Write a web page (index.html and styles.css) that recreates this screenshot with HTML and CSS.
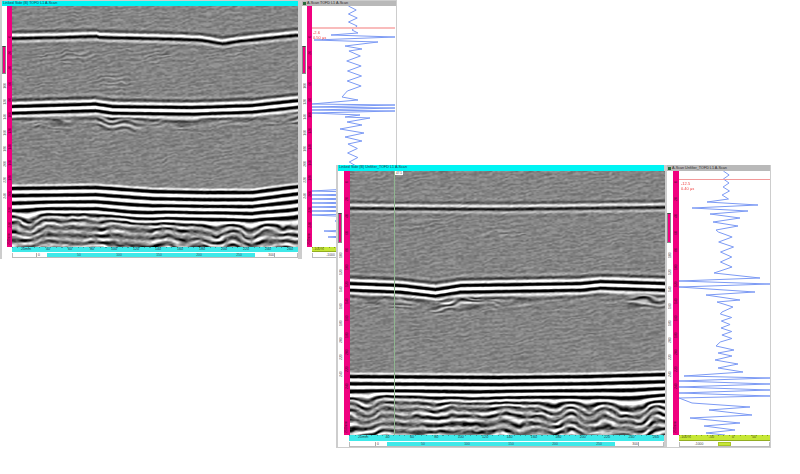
FILE: index.html
```html
<!DOCTYPE html>
<html lang="en">
<head>
<meta charset="utf-8">
<title>TOFD scans</title>
<link rel="stylesheet" href="styles.css">
</head>
<body>
<main class="desk">
  <section class="win win-one">
    <div class="pane pane-b">
      <div class="title title-b">Linked Side (B) TOFD L1 A-Scan</div>
      <div class="body">
        <div class="scale"><span class="thumb"></span><div class="marks"><i>100</i><i>120</i><i>140</i><i>160</i><i>180</i><i>200</i><i>220</i><i>240</i></div></div>
        <div class="depth"><i>0</i><i>20</i><i>40</i><i>60</i><i>80</i><i>100</i><i>120</i><i>140</i><i>160</i><i>180</i><i>200</i><i>220</i><i>240</i><b>250mm</b></div>
        <div class="view"><canvas id="b1" width="286" height="241"></canvas></div>
      </div>
      <div class="foot">
        <div class="ruler ruler-c"><i>20mm</i><i>40</i><i>60</i><i>80</i><i>100</i><i>120</i><i>140</i><i>160</i><i>180</i><i>200</i><i>220</i><i>240</i><i>260</i></div>
        <div class="scroll">
          <span class="s-blank"></span><span class="s-zero">0</span>
          <div class="s-bar"><i>50</i><i>100</i><i>150</i><i>200</i><i>250</i></div>
          <span class="s-end">300</span>
        </div>
      </div>
    </div>
    <div class="pane pane-a">
      <div class="title title-a"><em></em>A-Scan TOFD L1 A-Scan</div>
      <div class="body">
        <div class="scale"><span class="thumb"></span><div class="marks"><i>100</i><i>120</i><i>140</i><i>160</i><i>180</i><i>200</i><i>220</i><i>240</i></div></div>
        <div class="depth"><i>0</i><i>20</i><i>40</i><i>60</i><i>80</i><i>100</i><i>120</i><i>140</i><i>160</i><i>180</i><i>200</i><i>220</i><i>240</i><b>250mm</b></div>
        <div class="plot">
          <canvas id="a1" width="83" height="241"></canvas>
          <div class="cursor"></div>
          <div class="read">-2.6<br>0.50 µs</div>
        </div>
      </div>
      <div class="foot">
        <div class="ruler ruler-y"><i>-100%</i><i>-50</i><i>0</i><i>50</i></div>
        <div class="scroll"><span class="y-side">-1000</span><span class="y-mid"></span><span class="y-side"></span></div>
      </div>
    </div>
  </section>

  <section class="win win-two">
    <div class="pane pane-b">
      <div class="title title-b">Linked Side (B) Unfilter_TOFD L1 A-Scan</div>
      <div class="body">
        <div class="scale"><span class="thumb"></span><div class="marks"><i>100</i><i>120</i><i>140</i><i>160</i><i>180</i><i>200</i><i>220</i><i>240</i></div></div>
        <div class="depth"><i>0</i><i>20</i><i>40</i><i>60</i><i>80</i><i>100</i><i>120</i><i>140</i><i>160</i><i>180</i><i>200</i><i>220</i><i>240</i><b>250mm</b></div>
        <div class="view">
          <canvas id="b2" width="315" height="264"></canvas>
          <div class="vline"></div>
          <div class="vtag">47.5</div>
        </div>
      </div>
      <div class="foot">
        <div class="ruler ruler-c"><i>20mm</i><i>40</i><i>60</i><i>80</i><i>100</i><i>120</i><i>140</i><i>160</i><i>180</i><i>200</i><i>220</i><i>240</i><i>260</i></div>
        <div class="scroll">
          <span class="s-blank"></span><span class="s-zero">0</span>
          <div class="s-bar"><i>50</i><i>100</i><i>150</i><i>200</i><i>250</i></div>
          <span class="s-end">300</span>
        </div>
      </div>
    </div>
    <div class="pane pane-a">
      <div class="title title-a"><em></em>A-Scan Unfilter_TOFD L1 A-Scan</div>
      <div class="body">
        <div class="scale"><span class="thumb"></span><div class="marks"><i>100</i><i>120</i><i>140</i><i>160</i><i>180</i><i>200</i><i>220</i><i>240</i></div></div>
        <div class="depth"><i>0</i><i>20</i><i>40</i><i>60</i><i>80</i><i>100</i><i>120</i><i>140</i><i>160</i><i>180</i><i>200</i><i>220</i><i>240</i><b>250mm</b></div>
        <div class="plot">
          <canvas id="a2" width="91" height="264"></canvas>
          <div class="cursor"></div>
          <div class="read">-12.5<br>0.40 µs</div>
        </div>
      </div>
      <div class="foot">
        <div class="ruler ruler-y"><i>-100%</i><i>-50</i><i>0</i><i>50</i></div>
        <div class="scroll"><span class="y-side">-1000</span><span class="y-mid"></span><span class="y-side"></span></div>
      </div>
    </div>
  </section>
</main>
<script src="scans.js"></script>
</body>
</html>
```
FILE: styles.css
```css
* { box-sizing: border-box; }
html, body { margin: 0; padding: 0; background: #fff; }
body { width: 800px; height: 474px; overflow: hidden; font-family: "Liberation Sans", Arial, sans-serif; }
i, em, b { font-style: normal; font-weight: normal; }
.desk { position: relative; width: 800px; height: 474px; }
canvas { display: block; }
.view canvas { filter: blur(0.45px); }
.plot canvas { filter: blur(0.3px); }

.win { position: absolute; display: flex; background: #cdcdcd; }
.win-one { left: 0; top: 0; width: 397px; height: 259px; padding: 1px 1px 0 2px; gap: 4px;
  --title: 5px; --h: 241px; --side: 5px; --foot: 5px; --b-w: 296px; --a-w: 94px; --img: 286px; --plot: 83px;
  --step: 15.7px; --first: 23px; --bottom: 22px; --ruler-pad: 3px; --blank: 24px; --zero: 10px; --bar: 208px; --bar-cell: 40px; --bar-pad: 12px; --end: 20px; --y-side: 40px; --y-mid: 12px; }
.win-two { left: 336px; top: 165px; width: 435px; height: 283px; padding: 0 1px 1px 2px; gap: 3px;
  --title: 6px; --h: 264px; --side: 6px; --foot: 6px; --b-w: 326px; --a-w: 103px; --img: 315px; --plot: 91px;
  --step: 17px; --first: 0px; --bottom: 24.4px; --ruler-pad: 2px; --blank: 26px; --zero: 11px; --bar: 228px; --bar-cell: 44px; --bar-pad: 14px; --end: 24px; --y-side: 39px; --y-mid: 13px; }

.pane { display: flex; flex-direction: column; flex: none; background: #fff; }
.pane-b { width: var(--b-w); }
.pane-a { width: var(--a-w); }
.title { height: var(--title); flex: none; font-size: 3.7px; line-height: 5px; color: #16384c; white-space: nowrap; overflow: hidden; padding-left: 1px; }
.title-b { background: #00f4f4; }
.title-a { background: #b9b9b9; display: flex; align-items: center; gap: 1px; color: #2c2c2c; }
.title-a em { width: 3px; height: 3px; background: #2b6a3c; flex: none; }

.body { display: flex; height: var(--h); flex: none; }
.scale { width: var(--side); flex: none; background: #fff; display: flex; flex-direction: column; }
.thumb { display: block; width: 4px; height: 28px; margin: 40px 0 2px 0; background: #f0007f; border: 1px solid #8a8a8a; border-top-color: #444; flex: none; }
.win-two .thumb { margin-top: 42px; height: 30px; }
.marks { display: flex; flex-direction: column; align-items: center; padding-top: 2px; background: #fff; flex: 1; overflow: hidden; }
.marks i, .depth i { display: block; writing-mode: vertical-rl; transform: rotate(180deg); font-size: 3.4px; line-height: 4px; color: #555; text-align: center; height: var(--step); flex: none; }
.depth { width: var(--side); flex: none; background: #f0007f; display: flex; flex-direction: column; align-items: center; padding-top: var(--first); overflow: hidden; position: relative; }
.win-two .depth { padding-top: 3px; }
.depth i { color: #5a0030; }
.depth b { position: absolute; left: 0; right: 0; bottom: 2px; writing-mode: vertical-rl; transform: rotate(180deg); font-size: 3.6px; line-height: 5px; text-align: center; color: #50002a; }
.view { width: var(--img); flex: none; position: relative; overflow: hidden; }
.plot { width: var(--plot); flex: none; position: relative; overflow: hidden; background: #fff; }

.foot { margin-left: calc(var(--side) * 2); display: flex; flex-direction: column; gap: 1px; flex: none; }
.win-two .foot { margin-left: 11px; }
.win-two .pane-a .foot { margin-left: 12px; }
.ruler { height: var(--foot); flex: none; display: flex; padding-left: var(--ruler-pad); font-size: 3.7px; line-height: 5px; color: #16424c;
  background-image: repeating-linear-gradient(90deg, #2aa3a8 0 1px, transparent 1px 5.5px); background-size: 100% 1px; background-repeat: no-repeat; }
.ruler-c { background-color: #3ee9e9; }
.ruler-c i { width: var(--bottom); text-align: center; flex: none; }
.ruler-y { background-color: #c6e736; background-image: repeating-linear-gradient(90deg, #7f9a20 0 1px, transparent 1px 5.5px); border-bottom: 1px solid #92ad22; color: #46520c; justify-content: space-between; padding: 0 14px 0 1px; }
.scroll { height: 5px; flex: none; display: flex; background: #fff; border: 1px solid #bbb; border-top-width: 0; font-size: 3.4px; line-height: 5px; color: #444; }
.s-blank { width: var(--blank); flex: none; border-right: 1px solid #aaa; }
.s-zero { width: var(--zero); flex: none; padding-left: 1px; }
.s-bar { width: var(--bar); flex: none; background: #3ee9e9; display: flex; padding-left: var(--bar-pad); color: #2a5a64; }
.s-bar i { width: var(--bar-cell); text-align: center; flex: none; }
.s-end { width: var(--end); flex: none; border-right: 1px solid #aaa; text-align: right; }
.y-side { flex: 1; text-align: center; }
.y-mid { width: var(--y-mid); background: #c6e736; border: 1px solid #a8c426; flex: none; }

.cursor { position: absolute; left: 0; right: 0; top: 21px; height: 2px; background: #f9bcbc; }
.win-two .cursor { top: 8px; height: 1px; background: #f29a9a; }
.read { position: absolute; left: 1px; top: 24px; font-size: 4px; line-height: 5px; color: #f04040; }
.win-two .read { left: 2px; top: 10px; }
.vline { position: absolute; left: 44px; top: 0; bottom: 0; width: 1px; background: #8fb58f; }
.vtag { position: absolute; left: 45px; top: 0; width: 8px; height: 4px; background: #fff; font-size: 3.2px; line-height: 4px; color: #444; text-align: center; }
```
FILE: scans.js
```js
(function () {
  function hash(x, y) {
    var s = Math.sin(x * 127.1 + y * 311.7) * 43758.5453;
    return s - Math.floor(s);
  }
  function noise(x, y) {
    var xi = Math.floor(x), yi = Math.floor(y), fx = x - xi, fy = y - yi;
    fx = fx * fx * (3 - 2 * fx); fy = fy * fy * (3 - 2 * fy);
    var a = hash(xi, yi), b = hash(xi + 1, yi), c = hash(xi, yi + 1), d = hash(xi + 1, yi + 1);
    return (a + (b - a) * fx + (c - a) * fy + (a - b - c + d) * fx * fy) * 2 - 1;
  }
  function table(pts) {
    return function (x) {
      for (var i = 1; i < pts.length; i++) {
        if (x <= pts[i][0]) {
          var t = (x - pts[i - 1][0]) / (pts[i][0] - pts[i - 1][0]);
          return pts[i - 1][1] + (pts[i][1] - pts[i - 1][1]) * t;
        }
      }
      return pts[pts.length - 1][1];
    };
  }
  function smooth(a, b, v) {
    var t = Math.max(0, Math.min(1, (v - a) / (b - a)));
    return t * t * (3 - 2 * t);
  }
  var TAU = Math.PI * 2;

  function bscan(id, o) {
    var cv = document.getElementById(id), w = cv.width, h = cv.height;
    var ctx = cv.getContext('2d'), img = ctx.createImageData(w, h), px = img.data;
    var r1 = table(o.r1), r2 = table(o.r2), r3 = table(o.r3);
    for (var y = 0; y < h; y++) {
      for (var x = 0; x < w; x++) {
        var s = o.seed;
        var warp = noise(x / 18 + s, y / 14) * 1.8 + noise(x / 6 + s, y / 4) * 1.0;
        var ripple = Math.sin(TAU * (y + x * 0.16) / 4.6 + warp * 2);
        var patch = 0.3 + 0.7 * Math.abs(noise(x / 9, y / 7 + s));
        var boost = 1;
        o.spots.forEach(function (p) {
          var dx = (x - p[0]) / p[2], dy = (y - p[1]) / p[3];
          boost += p[4] * Math.exp(-(dx * dx + dy * dy));
        });
        var v = 132 + ripple * 16 * patch * boost + noise(x / 2.6, y / 1.5) * 15;

        var d = r1(x), t = y - d;
        var e = Math.exp(-Math.pow((t + 1.5) / 5.5, 2));
        v -= o.a1 * e * Math.cos(TAU * t / 7);

        d = r2(x); t = y - d;
        var w2 = noise(x / 18, y / 7) * 1.4 * smooth(6, 16, t);
        e = Math.exp(-Math.pow((t - 3) / 9, 2));
        v -= 210 * e * Math.cos(TAU * t / 6.8 + w2);
        var tail = smooth(9, 14, t) * (1 - smooth(18, 30, t));
        v += tail * 100 * Math.sin(TAU * t / 6.2 + noise(x / 14, y / 6) * 3) * Math.abs(noise(x / 24, 3));

        d = r3(x); t = y - d;
        if (t > -6) {
          var calm = o.calm + 10 * x / w;
          var chaos = smooth(calm - 10, calm + 6, t);
          var ph = TAU * t / 7.2 + chaos * (noise(x / 17, t / 34) * 4.6 + noise(x / 6, y / 5) * 0.9) + smooth(6, 30, t) * noise(x / 40, 7) * 1.8;
          var amp = (1 - chaos) * 185 + chaos * (35 + 125 * Math.abs(noise(x / 13, y / 9 + 5))) + chaos * noise(x / 3, y / 2) * 24;
          v += -amp * smooth(-6, -1, t) * Math.cos(ph);
        }
        var i = (y * w + x) * 4;
        v = Math.max(0, Math.min(255, v));
        px[i] = px[i + 1] = px[i + 2] = v;
        px[i + 3] = 255;
      }
    }
    ctx.putImageData(img, 0, 0);
  }

  function zig(y0, y1, step, cx, amp, seed) {
    var out = [], k = 0;
    for (var y = y0; y < y1; y += step / 2, k++) {
      var a = amp * (0.6 + 0.4 * hash(k, seed));
      out.push([cx + (k % 2 ? a : -a), y]);
    }
    return out;
  }
  function ascan(id, ox, oy, pts) {
    var ctx = document.getElementById(id).getContext('2d');
    ctx.strokeStyle = '#7c9af4';
    ctx.lineWidth = 1;
    ctx.beginPath();
    pts.forEach(function (p, i) {
      var x = p[0] - ox, y = p[1] - oy;
      if (i) ctx.lineTo(x, y); else ctx.moveTo(x, y);
    });
    ctx.stroke();
  }

  bscan('b1', {
    seed: 3, calm: 28, a1: 150,
    r1: [[0, 32], [50, 31], [84, 30], [87, 31], [168, 33], [190, 34], [210, 37.5], [226, 35], [283, 29], [286, 29]],
    r2: [[0, 100], [83, 97.5], [100, 100], [180, 101], [240, 99], [286, 94]],
    r3: [[0, 182], [83, 181], [140, 185], [190, 186], [240, 186], [286, 180]],
    spots: [[45, 50, 16, 8, 1.6], [70, 50, 12, 7, 1.5], [140, 47, 22, 8, 2], [100, 76, 16, 10, 1.8], [225, 47, 14, 5, 1.4]]
  });
  bscan('b2', {
    seed: 9, calm: 22, a1: 115,
    r1: [[0, 37], [150, 38], [315, 36]],
    r2: [[0, 112], [50, 114], [85, 118], [110, 114], [230, 112], [250, 110], [315, 112]],
    r3: [[0, 205], [150, 206], [240, 205], [315, 203]],
    spots: [[70, 55, 16, 8, 1.6], [155, 62, 26, 7, 1.5], [90, 130, 30, 14, 0.8]]
  });

  var s1 = zig(6, 30, 8, 353, 5, 1).concat(
    [[352, 30], [358, 33], [331, 35], [395, 37], [314, 40], [378, 42], [345, 46], [362, 49]],
    zig(51, 96, 10, 354, 8, 2),
    [[342, 97], [358, 100], [312, 104], [395, 105], [312, 107], [395, 108], [312, 110], [395, 111], [312, 113], [360, 115], [345, 117], [370, 118], [347, 122], [362, 125]],
    [[340, 129], [364, 133], [345, 137], [362, 141]],
    zig(144, 190, 9, 353, 6, 3),
    [[312, 191], [395, 193], [312, 195], [395, 197], [312, 199], [395, 201], [312, 203], [395, 205], [312, 207], [395, 209], [312, 211], [395, 213], [312, 215],
     [380, 218], [335, 221], [372, 224], [338, 226], [380, 229], [324, 231], [372, 234], [328, 237], [375, 240], [345, 244], [360, 247]]
  );
  ascan('a1', 312, 6, s1);

  var s2 = zig(171, 200, 8, 726, 4, 4).concat(
    [[707, 202], [758, 205], [692, 208], [748, 211], [710, 214], [740, 218], [713, 222], [738, 226], [716, 230]],
    zig(232, 268, 10, 726, 9, 5),
    [[714, 273], [760, 278], [679, 281], [770, 284], [679, 287], [755, 292], [706, 295], [740, 300], [717, 302], [733, 307], [722, 312]],
    zig(314, 344, 7, 726, 6, 6),
    [[716, 346], [734, 350], [718, 353], [732, 356], [715, 360], [738, 364], [718, 368], [743, 372], [684, 376],
     [770, 378], [679, 381], [770, 384], [679, 387], [770, 390], [679, 393], [770, 396], [679, 398],
     [692, 403], [750, 407], [709, 410], [752, 415], [690, 418], [740, 423], [704, 426], [735, 430], [706, 433], [725, 435]]
  );
  ascan('a2', 679, 171, s2);
})();
```
